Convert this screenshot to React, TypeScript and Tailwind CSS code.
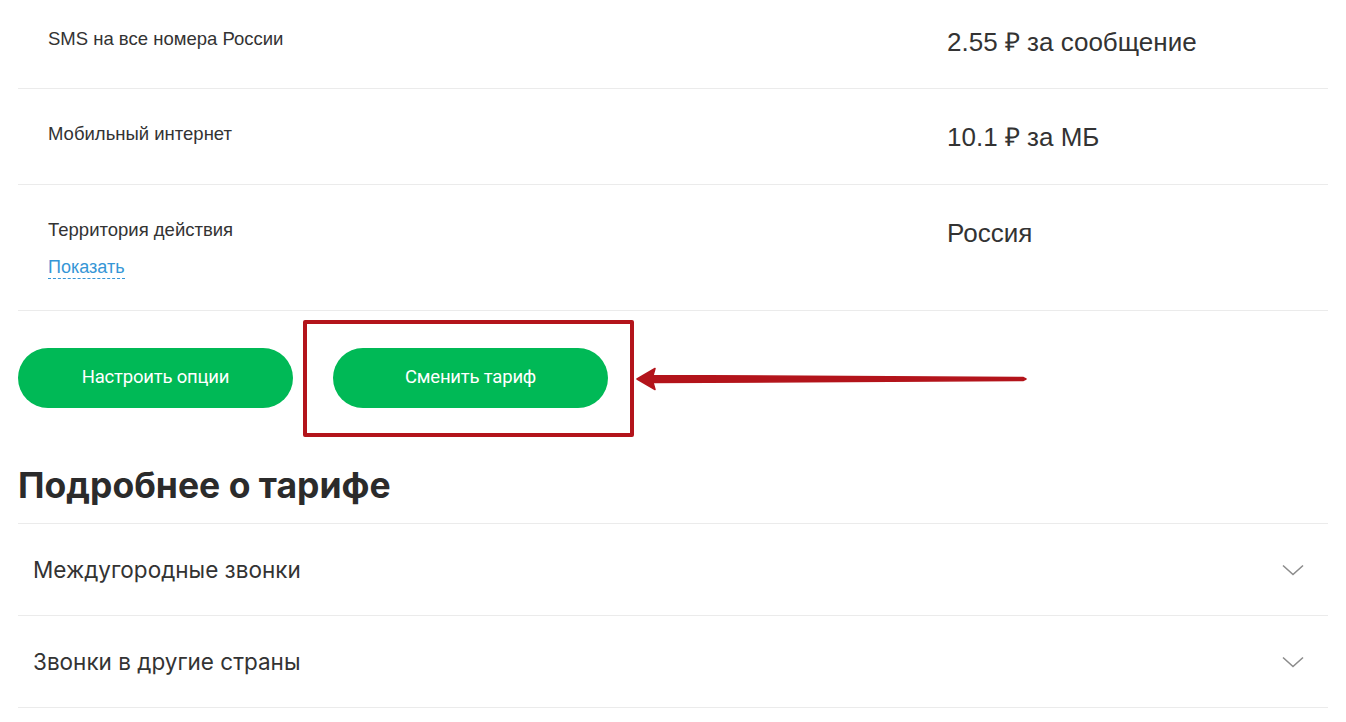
const rows = [
  { label: "SMS на все номера России", value: "2.55 ₽ за сообщение" },
  { label: "Мобильный интернет", value: "10.1 ₽ за МБ" },
];

const details = ["Междугородные звонки", "Звонки в другие страны"];

function ArrowAnnotation() {
  return (
    <svg
      className="pointer-events-none absolute left-[601px] top-[48px]"
      width="420"
      height="40"
      viewBox="0 0 420 40"
      aria-hidden="true"
    >
      <polygon
        points="18,20 36,9.5 34,16.5 404,18.5 407,20 404,21.5 34,23.5 36,30.5"
        fill="#b3141b"
        stroke="#b3141b"
        strokeWidth="1.5"
        strokeLinejoin="round"
      />
    </svg>
  );
}

function Chevron() {
  return (
    <svg width="22" height="12" viewBox="0 0 22 12" fill="none" aria-hidden="true">
      <path d="M1 1.5 11 10.5 21 1.5" stroke="#8c8c8c" strokeWidth="1.6" />
    </svg>
  );
}

export default function App() {
  return (
    <div className="min-h-[722px] bg-white px-[18px] font-['Liberation_Sans',Arial,sans-serif] text-[#333]">
      {rows.map((row, i) => (
        <div
          key={row.label}
          className={`grid grid-cols-[899px_1fr] border-b border-[#ebebeb] pl-[30px] ${
            i === 0 ? "h-[89px] pt-[28px]" : "h-[96px] pt-[34px]"
          }`}
        >
          <p className="text-[18.5px] leading-[21px]">{row.label}</p>
          <p className="-mt-[1px] text-[26px] leading-[30px]">{row.value}</p>
        </div>
      ))}

      <div className="grid h-[126px] grid-cols-[899px_1fr] border-b border-[#ebebeb] pl-[30px] pt-[34px]">
        <div>
          <p className="text-[18.5px] leading-[21px]">Территория действия</p>
          <a
            href="#"
            className="mt-[17px] inline-block border-b border-dashed border-[#3596d6] text-[18px] leading-[21px] text-[#3596d6]"
          >
            Показать
          </a>
        </div>
        <p className="-mt-[1px] text-[26px] leading-[30px]">Россия</p>
      </div>

      <div className="relative flex gap-[40px] pt-[37px] font-['Roboto',sans-serif]">
        <button className="h-[60px] w-[275px] rounded-full bg-[#00b956] text-[18.5px] tracking-[-0.2px] text-white">
          Настроить опции
        </button>
        <button className="h-[60px] w-[275px] rounded-full bg-[#00b956] text-[18.5px] tracking-[-0.2px] text-white">
          Сменить тариф
        </button>
        <div className="pointer-events-none absolute left-[285px] top-[9px] h-[117px] w-[331px] rounded-[2px] border-[4px] border-[#b3141b]" />
        <ArrowAnnotation />
      </div>

      <h2 className="mt-[57px] font-['Inter',sans-serif] text-[35.5px] font-bold leading-[42px] text-[#2b2b2b]">
        Подробнее о тарифе
      </h2>

      <div className="mt-[16px] border-t border-[#ebebeb] font-['Inter',sans-serif]">
        {details.map((item) => (
          <div
            key={item}
            className="flex h-[92px] items-center justify-between border-b border-[#ebebeb] pl-[15px] pr-[24px]"
          >
            <span className="text-[22.5px] text-[#333]">{item}</span>
            <Chevron />
          </div>
        ))}
      </div>
    </div>
  );
}
